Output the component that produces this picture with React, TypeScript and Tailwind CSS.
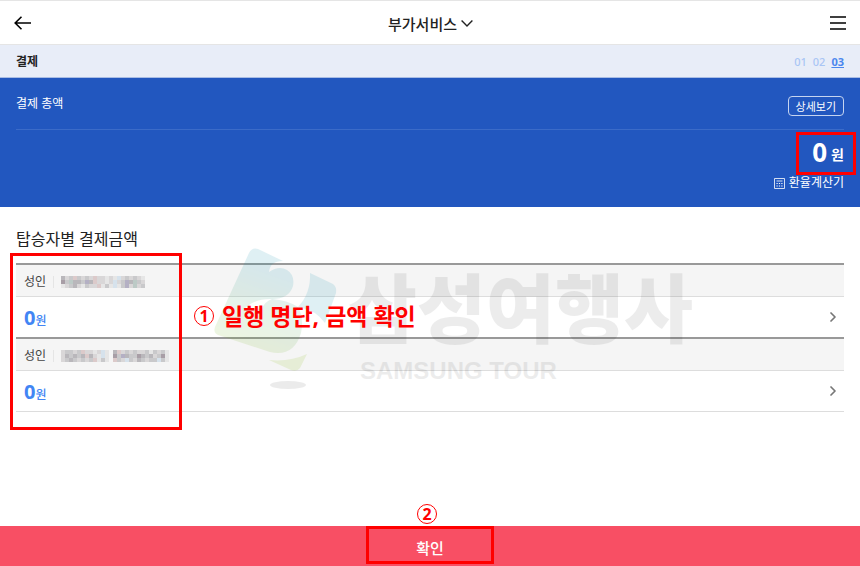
import React from 'react';
import { ChevronRight } from 'lucide-react';

type Passenger = {
  id: number;
  type: string;
  amount: number;
  mask: string[];
};

// Cell colours of the masked names
const maskColors: Record<string, string> = {
  a: '#a89ea6',
  b: '#b9b7bb',
  c: '#c9c9cb',
  d: '#d9d7d8',
  e: '#e6e6e6',
  r: '#dccaca',
  u: '#b4b0c4',
  s: '#d6e2ec',
  g: '#bccac6',
};

const passengers: Passenger[] = [
  {
    id: 1,
    type: '성인',
    amount: 0,
    mask: ['bdcrcdcdrddedesdcdcde', 'acgbbcubrddedsdcubgcd', 'edcbdecddrecesecudgdc'],
  },
  {
    id: 2,
    type: '성인',
    amount: 0,
    mask: ['dccdcrddedse.brdcdcddcecdce', 'dbcbcbrbdese.acubccabcbdcae', 'dcbcdcdcrece.rcdscdbcdccsce'],
  },
];

const steps = ['01', '02', '03'];

const MaskedName: React.FC<{ rows: string[] }> = ({ rows }) => (
  <svg
    width={rows[0].length * 4}
    height={rows.length * 4}
    shapeRendering="crispEdges"
    aria-hidden="true"
  >
    {rows.map((row, y) =>
      row
        .split('')
        .map((cell, x) =>
          maskColors[cell] ? (
            <rect key={`${x}-${y}`} x={x * 4} y={y * 4} width="4" height="4" fill={maskColors[cell]} />
          ) : null
        )
    )}
  </svg>
);

const StepMark: React.FC<{ value: number }> = ({ value }) => (
  <span className="flex size-5 items-center justify-center rounded-full border border-[#f00] text-base leading-none font-bold text-[#f00]">
    {value}
  </span>
);

// Agency watermark behind the passenger list
const Watermark: React.FC = () => (
  <div className="pointer-events-none absolute -top-4 left-[196px] flex gap-2">
    <svg width="128" height="144" viewBox="0 0 128 144" aria-hidden="true" className="shrink-0 opacity-[0.12]">
      <defs>
        <linearGradient id="mark" x1="0.6" y1="0" x2="0.3" y2="1">
          <stop offset="0.2" stopColor="#008ba8" />
          <stop offset="1" stopColor="#7fb800" />
        </linearGradient>
      </defs>
      <path
        fill="url(#mark)"
        fillRule="evenodd"
        d="M37 6Q40 0 46 2L71 14Q58 14 57 25Q67 18 75 23Q83 28 81 39Q77 52 60 52Q75 53 86 60Q92 71 89 86Q83 106 66 106Q62 106 58 105L6 88Q1 86 3 80ZM31 63Q43 51 60 52Q52 55 50 62Q40 60 31 63Z"
      />
      <path fill="#008ba8" d="M98 26L121 37Q125 40 124 46L113 76Q104 63 86 60Q99 46 98 26Z" />
      <path fill="#7fb800" d="M57 113Q78 115 95 107L88 121Q85 125 79 123Z" />
      <ellipse cx="76" cy="138" rx="18" ry="4" fill="#000" opacity="0.6" />
    </svg>
    <div className="pt-3 text-black opacity-[0.07]">
      <p className="text-[75px] leading-[98px] font-black whitespace-nowrap">삼성여행사</p>
      <p className="pl-3 font-['Liberation_Sans'] text-2xl leading-7 font-bold whitespace-nowrap">SAMSUNG TOUR</p>
    </div>
  </div>
);

const App: React.FC = () => {
  return (
    <div className="flex min-h-screen flex-col bg-white font-['Noto_Sans','Noto_Sans_CJK_KR',sans-serif] text-[#222]">
      {/* Title bar */}
      <header className="flex h-[45px] items-center justify-between border-y border-[#e5e5e5] px-3.5">
        <button type="button" aria-label="뒤로" className="text-black">
          <svg width="17" height="14" viewBox="0 0 17 14" fill="none" stroke="currentColor" strokeWidth="1.6">
            <path d="M7.5 .8L1.2 7l6.3 6.2M1.2 7H17" />
          </svg>
        </button>
        <button type="button" className="flex items-center gap-1 pt-0.5 text-[15px] leading-5 font-medium">
          부가서비스
          <svg width="12" height="7" viewBox="0 0 12 7" fill="none" stroke="currentColor" strokeWidth="1.4" aria-hidden="true">
            <path d="M.6 .6L6 6L11.4 .6" />
          </svg>
        </button>
        <button type="button" aria-label="메뉴" className="text-black">
          <svg width="16" height="14" viewBox="0 0 16 14" fill="none" stroke="currentColor" strokeWidth="1.7">
            <path d="M0 1h16M0 7h16M0 13h16" />
          </svg>
        </button>
      </header>

      {/* Progress */}
      <div className="flex h-[33px] items-center justify-between border-b border-[#a9bde5] bg-[#e8edf8] px-4">
        <h1 className="pt-0.5 text-xs font-bold">결제</h1>
        <ol className="flex gap-1.5 pt-0.5 text-[11px]">
          {steps.map((step) => (
            <li
              key={step}
              className={step === '03' ? 'font-bold text-[#4a86ee] underline' : 'font-medium text-[#a9c5f5]'}
            >
              {step}
            </li>
          ))}
        </ol>
      </div>

      {/* Total */}
      <section className="bg-[#2257bf] px-4 pb-4 text-white">
        <div className="flex h-[52px] items-center justify-between border-b border-[#3b6bc8]">
          <h2 className="text-xs">결제 총액</h2>
          <button
            type="button"
            className="mt-1 h-5 rounded border border-[#c5d4f0] px-[7px] text-[11px] leading-5"
          >
            상세보기
          </button>
        </div>
        <div className="flex flex-col items-end">
          <p className="relative flex h-[45px] items-center gap-1 font-bold">
            <span className="text-[26px]">0</span>
            <span className="pt-1 text-sm">원</span>
            <span className="absolute -right-3 -left-4 top-0.5 bottom-0 border-3 border-[#f00]" />
          </p>
          <button type="button" className="flex items-center gap-1 text-xs leading-4">
            <svg width="11" height="11" viewBox="0 0 11 11" fill="none" stroke="currentColor" strokeWidth="0.8" aria-hidden="true">
              <path d="M.5 .5h10v10H.5zM2.5 3h6" />
              <path d="M2.5 5.5h6M2.5 8h6" strokeDasharray="1.2 1.2" strokeWidth="1.2" />
            </svg>
            환율계산기
          </button>
        </div>
      </section>

      {/* Amount by passenger */}
      <main className="px-4 pt-5 pb-8">
        <h2 className="mb-3 text-base leading-6">탑승자별 결제금액</h2>
        <div className="relative">
          <ul className="border-b border-[#ddd]">
            {passengers.map((passenger) => (
              <li key={passenger.id} className="border-t-2 border-[#999]">
                <div className="flex h-8 items-center border-b border-[#ddd] bg-[#f5f5f5] px-2 pt-0.5 text-xs text-[#444]">
                  <span>{passenger.type}</span>
                  <span className="mx-[7px] h-3 w-px bg-[#e5e5e5]" />
                  <MaskedName rows={passenger.mask} />
                </div>
                <button type="button" className="flex h-10 w-full items-center justify-between pr-[3px] pl-2">
                  <span className="flex items-baseline pt-0.5 font-bold text-[#4285f4]">
                    <span className="text-xl">{passenger.amount}</span>
                    <span className="text-xs font-medium">원</span>
                  </span>
                  <ChevronRight className="size-4 text-[#777]" strokeWidth={2.6} />
                </button>
              </li>
            ))}
          </ul>
          <Watermark />
          <span className="pointer-events-none absolute -top-2.5 -bottom-[18px] -left-1.5 w-[172px] border-3 border-[#f00]" />
          <p className="pointer-events-none absolute top-9 left-[178px] flex items-center gap-2 text-[23px] font-bold text-[#f00]">
            <StepMark value={1} />
            일행 명단, 금액 확인
          </p>
        </div>
      </main>

      {/* Confirm */}
      <footer className="mt-auto bg-[#f84f64]">
        <button
          type="button"
          className="relative mx-auto flex h-10 w-32 items-center justify-center pt-1 text-[15px] font-medium text-white"
        >
          확인
          <span className="absolute inset-x-0 top-0 bottom-0.5 border-3 border-[#f00]" />
          <span className="absolute bottom-full left-[51px] mb-0.5">
            <StepMark value={2} />
          </span>
        </button>
      </footer>
    </div>
  );
};

export default App;
